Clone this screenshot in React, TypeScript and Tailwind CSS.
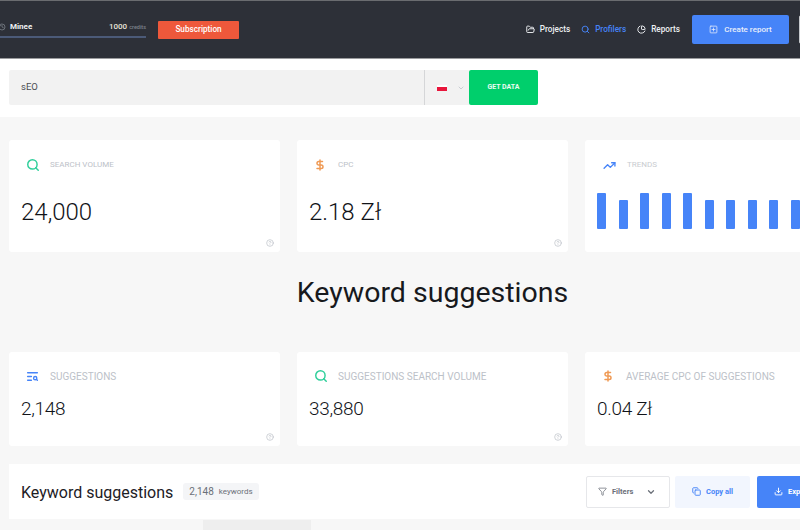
import React from 'react';
import { ChevronDown, CircleHelp, Copy, Download, Filter, FolderOpen, PieChart, Search, SquarePlus, TrendingUp, DollarSign, History, TextSearch } from 'lucide-react';

const trendBars = [36, 29, 36, 36, 36, 29, 29, 29, 29, 29, 29, 29];

function HelpIcon() {
  return (
    <div className="flex justify-end">
      <CircleHelp className="w-[8px] h-[8px] text-[#b9bec6]" strokeWidth={2} />
    </div>
  );
}

function NavItem({ icon, label, active }: { icon: React.ReactNode; label: string; active?: boolean }) {
  return (
    <div className={`flex items-center gap-[5px] text-[8.2px] font-medium ${active ? 'text-[#4684f8]' : 'text-[#eef0f3]'}`}>
      {icon}
      <span>{label}</span>
    </div>
  );
}

function TopCard({ icon, label, value }: { icon: React.ReactNode; label: string; value: string }) {
  return (
    <div className="bg-white rounded-[3px] h-[112px] pl-[12px] pr-[6px] pt-[17px] pb-[5px] flex flex-col">
      <div className="flex items-center h-[16px]">
        <div className="w-[29px] pl-[5px]">{icon}</div>
        <span className="text-[8px] text-[#bcc1c8]">{label}</span>
      </div>
      <div className="mt-[23px] text-[24px] leading-[32px] font-light text-[#111318] grow">{value}</div>
      <HelpIcon />
    </div>
  );
}

function SmallCard({ icon, label, value }: { icon: React.ReactNode; label: string; value: string }) {
  return (
    <div className="bg-white rounded-[3px] h-[94px] pl-[12px] pr-[6px] pt-[16px] pb-[5px] flex flex-col">
      <div className="flex items-center h-[16px]">
        <div className="w-[29px] pl-[5px]">{icon}</div>
        <span className="text-[10px] text-[#bcc1c8]">{label}</span>
      </div>
      <div className="mt-[12px] text-[19px] leading-[26px] font-light tracking-[-0.3px] text-[#111318] grow">{value}</div>
      <HelpIcon />
    </div>
  );
}

export default function App() {
  return (
    <div className="w-[800px] h-[530px] overflow-hidden bg-[#f7f7f7] font-['Roboto',sans-serif]">
      <header className="w-[860px] h-[59px] bg-[#2d3038] border-t border-b border-t-[#6a6c70] border-b-[#9a9b9e] flex items-center justify-between">
        <div className="flex items-center gap-[12px]">
          <div className="w-[148px] -ml-[2px] border-b-2 border-[#4b5a78] h-[17px] flex items-start justify-between">
            <div className="flex items-center gap-[4px] text-[8px] font-bold text-[#eef0f3]">
              <History className="w-[8px] h-[8px] text-[#8a8f99]" />
              <span>Minee</span>
            </div>
            <div className="text-[8px] font-medium text-[#e8e4d8]">
              1000 <span className="text-[5.5px] text-[#7d828c]">credits</span>
            </div>
          </div>
          <div className="w-[81px] h-[18px] bg-[#ee583b] rounded-[1px] flex items-center justify-center text-[8.2px] font-medium text-white">
            Subscription
          </div>
        </div>
        <div className="flex items-center">
          <div className="flex items-center gap-[11px] mr-[12px]">
            <NavItem icon={<FolderOpen className="w-[9px] h-[9px]" strokeWidth={2.5} />} label="Projects" />
            <NavItem icon={<Search className="w-[9px] h-[9px]" strokeWidth={2.5} />} label="Profilers" active />
            <NavItem icon={<PieChart className="w-[9px] h-[9px]" strokeWidth={2.5} />} label="Reports" />
          </div>
          <div className="w-[97px] h-[29px] bg-[#4684f8] rounded-[2px] flex items-center justify-center gap-[6px] text-[8px] font-medium text-[#e9effb]">
            <SquarePlus className="w-[9px] h-[9px]" />
            <span>Create report</span>
          </div>
          <div className="ml-[10px] w-[61px] h-[29px] border border-[#c6c8cc] rounded-[2px]" />
        </div>
      </header>

      <div className="bg-white h-[58px] pl-[9px] pt-[11px] flex items-start">
        <div className="w-[415px] h-[35px] bg-[#f2f2f2] rounded-l-[2px] pl-[12px] flex items-center text-[9.5px] text-[#4a4d52]">
          sEO
        </div>
        <div className="w-[45px] h-[35px] bg-[#f2f2f2] border-l border-[#d5d6d8] flex items-center pl-[12px] gap-[10px]">
          <div className="w-[10px] h-[6px] flex flex-col">
            <div className="h-[2px] bg-white" />
            <div className="h-[4px] bg-[#e8163c]" />
          </div>
          <ChevronDown className="w-[8px] h-[8px] text-[#b5bac2]" />
        </div>
        <div className="w-[69px] h-[35px] bg-[#00cf6c] rounded-[2px] flex items-center justify-center text-[7px] font-bold text-[#e8fbf1]">
          GET DATA
        </div>
      </div>

      <main className="w-[847px] ml-[9px] pt-[23px]">
        <div className="grid grid-cols-[271px_271px_271px] gap-[17px]">
          <TopCard icon={<Search className="w-[14px] h-[14px] text-[#2fcf9b]" strokeWidth={2.5} />} label="SEARCH VOLUME" value="24,000" />
          <TopCard icon={<DollarSign className="w-[12px] h-[12px] text-[#ef9a55]" strokeWidth={3} />} label="CPC" value="2.18 Zł" />
          <div className="bg-white rounded-[3px] h-[112px] pl-[12px] pt-[17px]">
            <div className="flex items-center h-[16px]">
              <div className="w-[30px] pl-[6px]">
                <TrendingUp className="w-[13px] h-[13px] text-[#4684f8]" strokeWidth={2.5} />
              </div>
              <span className="text-[8px] text-[#c9ccd0]">TRENDS</span>
            </div>
            <div className="mt-[20px] h-[36px] flex items-end gap-[12.5px]">
              {trendBars.map((h, i) => (
                <div key={i} className="w-[9px] bg-[#4684f8] rounded-[1px]" style={{ height: h }} />
              ))}
            </div>
          </div>
        </div>

        <h1 className="h-[82px] mb-[18px] flex items-center justify-center text-[28.5px] text-[#17191d]">
          Keyword suggestions
        </h1>

        <div className="grid grid-cols-[271px_271px_271px] gap-[17px]">
          <SmallCard icon={<TextSearch className="w-[13px] h-[13px] text-[#4684f8]" strokeWidth={2.5} />} label="SUGGESTIONS" value="2,148" />
          <SmallCard icon={<Search className="w-[14px] h-[14px] text-[#2fcf9b]" strokeWidth={2.5} />} label="SUGGESTIONS SEARCH VOLUME" value="33,880" />
          <SmallCard icon={<DollarSign className="w-[12px] h-[12px] text-[#ef9a55]" strokeWidth={3} />} label="AVERAGE CPC OF SUGGESTIONS" value="0.04 Zł" />
        </div>

        <div className="mt-[18px] bg-white h-[55px] pl-[12px] flex items-center">
          <span className="text-[16px] text-[#1d2025] translate-y-[1px]">Keyword suggestions</span>
          <div className="ml-[10px] h-[17px] px-[6px] bg-[#f4f5f7] rounded-[3px] flex items-center gap-[5px] text-[#6b7079]">
            <span className="text-[10px]">2,148</span>
            <span className="text-[8px]">keywords</span>
          </div>
          <div className="ml-[auto] flex items-center">
            <div className="w-[84px] h-[32px] border border-[#e6e7ea] rounded-[2px] pl-[11px] pr-[13px] flex items-center text-[7.5px] font-bold text-[#6b7079]">
              <Filter className="w-[9px] h-[9px] mr-[5px]" />
              <span>Filters</span>
              <ChevronDown className="w-[10px] h-[10px] ml-auto" strokeWidth={3} />
            </div>
            <div className="ml-[5px] w-[75px] h-[32px] bg-[#f2f6fe] rounded-[2px] flex items-center justify-center gap-[5px] text-[7.5px] font-bold text-[#4684f8]">
              <Copy className="w-[9px] h-[9px]" strokeWidth={2.5} />
              <span>Copy all</span>
            </div>
            <div className="ml-[7px] w-[84px] h-[32px] bg-[#4684f8] rounded-[2px] pl-[17px] flex items-center gap-[5px] text-[7.5px] font-bold text-white mr-[15px]">
              <Download className="w-[9px] h-[9px]" strokeWidth={2.5} />
              <span>Export</span>
            </div>
          </div>
        </div>

        <div className="ml-[194px] mt-[1px] w-[108px] h-[20px] bg-[#eeeeee]" />
      </main>
    </div>
  );
}
